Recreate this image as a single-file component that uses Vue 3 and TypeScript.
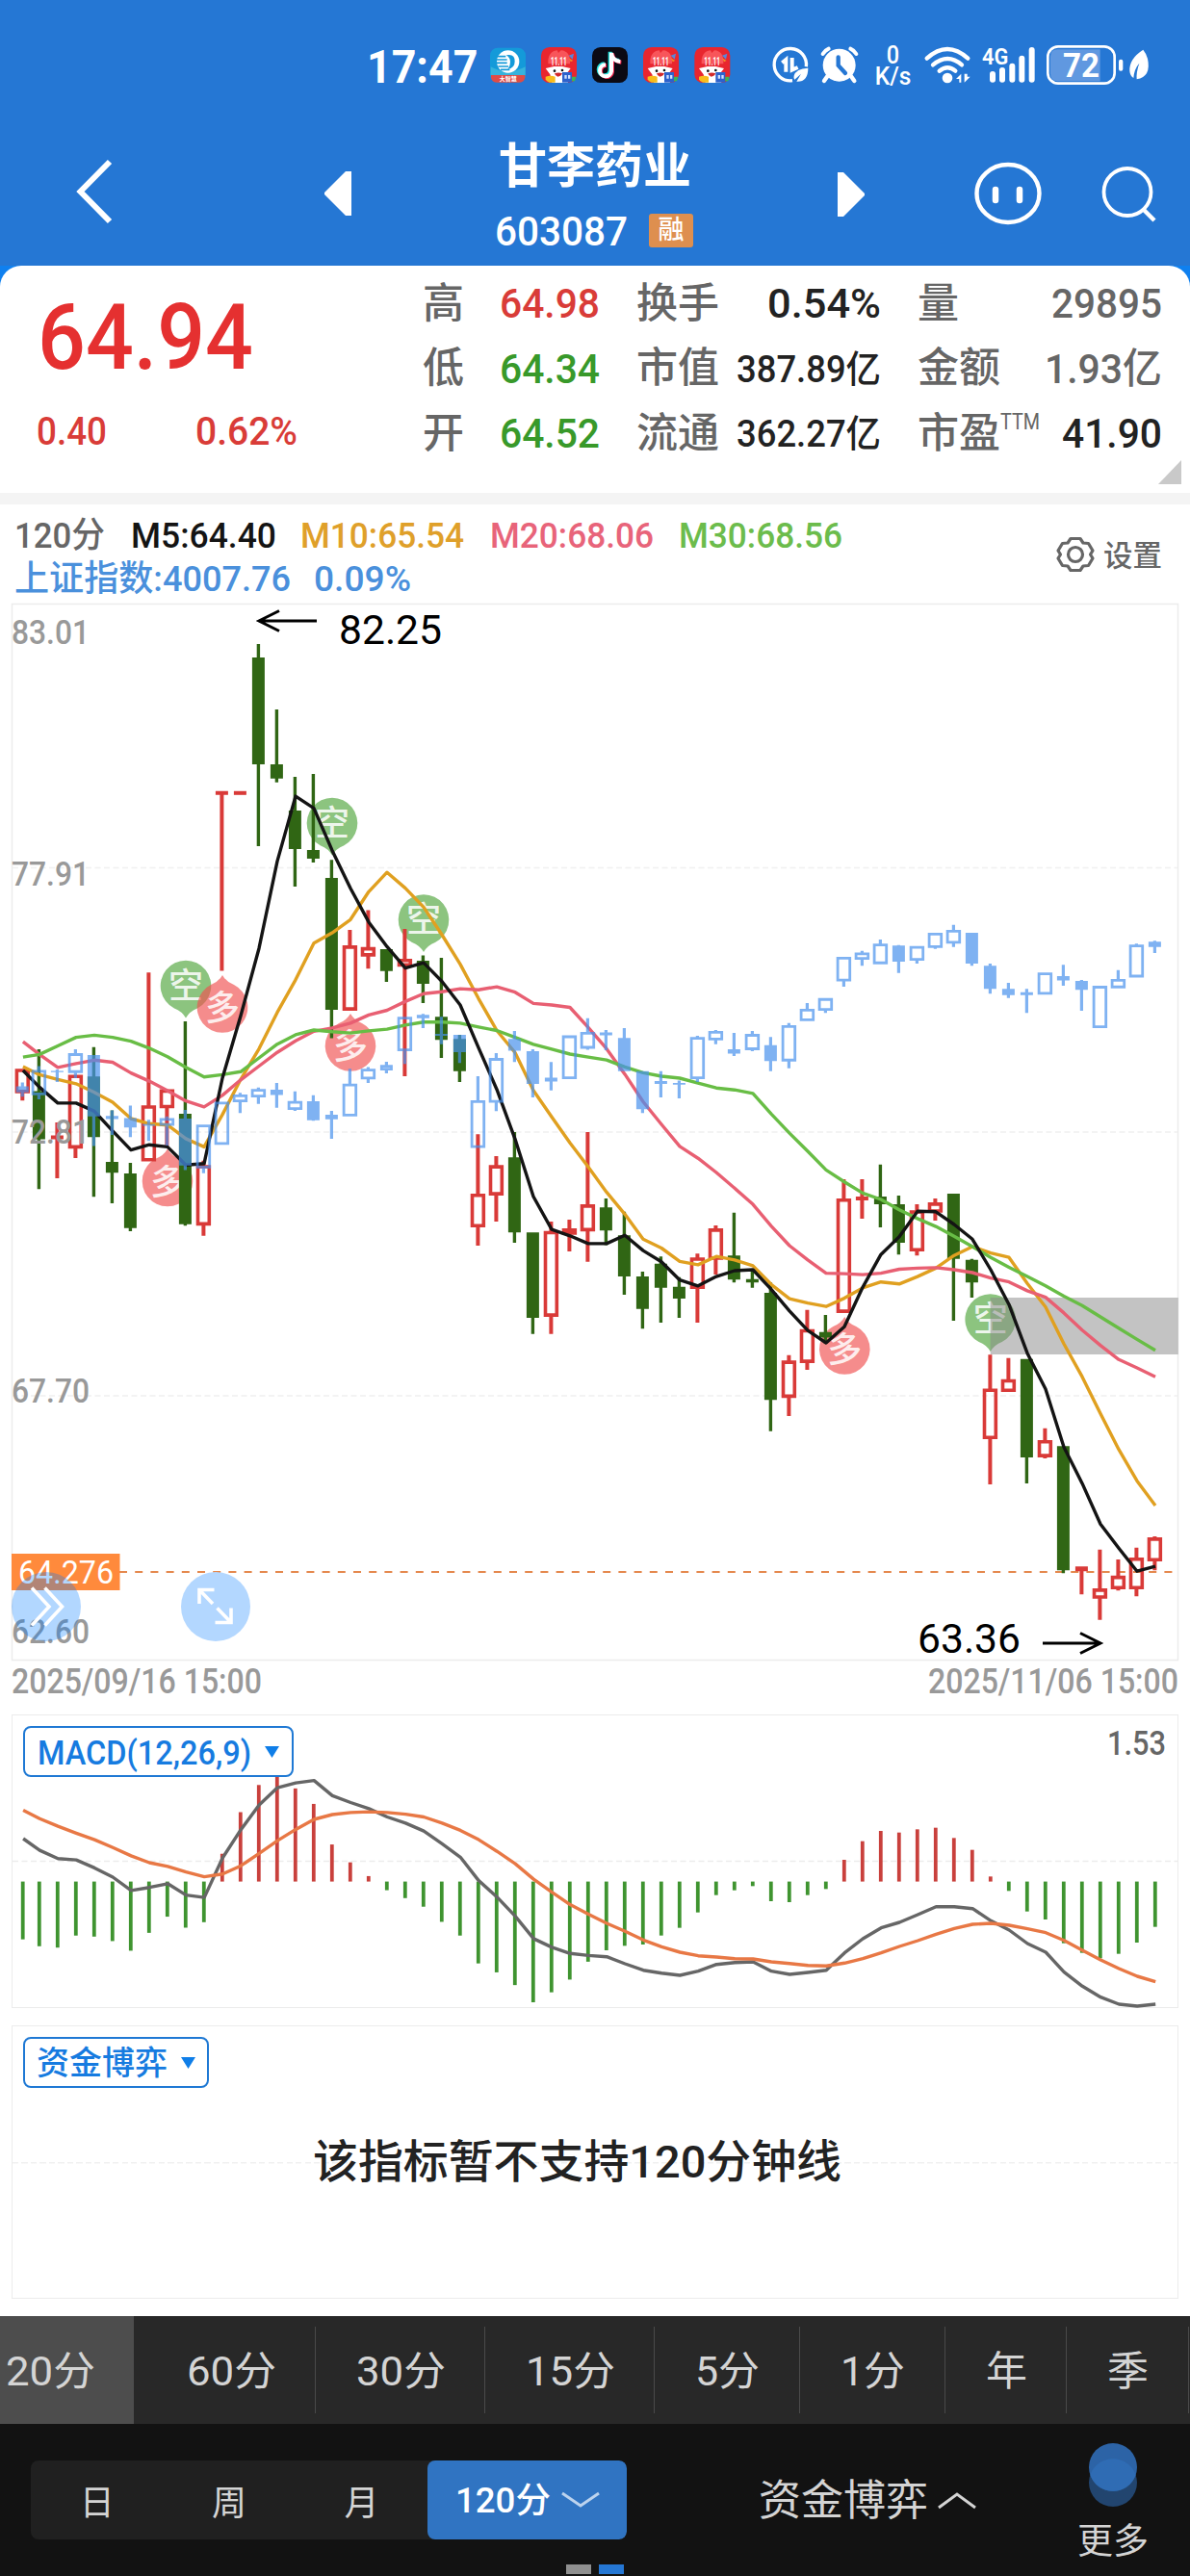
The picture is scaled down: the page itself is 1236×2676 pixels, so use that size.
<script setup lang="ts">
import { h } from 'vue'

type Candle = [kind: string, high: number, top: number, bottom: number, low: number]

const FONT = 'Roboto, "Noto Sans CJK SC", sans-serif'

/* Single line of text condensed to an exact width */
const Fit = (p: { t: string; w: number; s: number; b?: number | string }) =>
  h('svg', { width: p.w, height: p.s, style: 'display:block;overflow:visible;flex:none' }, [
    h('text', {
      x: 0, y: p.s * 0.86, fill: 'currentColor', textLength: p.w, lengthAdjust: 'spacingAndGlyphs',
      'font-size': p.s, 'font-weight': p.b ?? 400, 'font-family': FONT,
    }, p.t),
  ])
Fit.props = ['t', 'w', 's', 'b']

const quotes = [
  { k: '高', v: '64.98', c: 'red', w: 104, s: 43 }, { k: '换手', v: '0.54%', c: 'dark', w: 118, s: 43 }, { k: '量', v: '29895', c: 'gray', w: 115, s: 43 },
  { k: '低', v: '64.34', c: 'green', w: 104, s: 43 }, { k: '市值', v: '387.89亿', c: 'dark', w: 150, s: 39 }, { k: '金额', v: '1.93亿', c: 'gray', w: 122, s: 43 },
  { k: '开', v: '64.52', c: 'green', w: 104, s: 43 }, { k: '流通', v: '362.27亿', c: 'dark', w: 150, s: 39 }, { k: '市盈', sup: 'TTM', v: '41.90', c: 'dark', w: 104, s: 43 },
]

const X = (i: number) => (i === 0 ? 23.3 : 21.4 + 19 * i)
/* the price series is stored in three blocks of 21 bars, each with its own unit */
const Y = (i: number, v: number) => (i < 21 ? 620 + v / 2.24 : i < 42 ? 620 + v / 1.96 : 920 + v / 1.96)
/* the MACD series is stored in two blocks */
const MY = (i: number, v: number) => (i < 32 ? 1560 + v / 2.8 : 1660 + v / 3)

const stock: Candle[] = [
  ['r', 1098, 1098, 1155, 1172], ['g', 1053, 1150, 1262, 1378], ['r', 1223, 1253, 1262, 1353], ['r', 1112, 1112, 1284, 1306], ['g', 1048, 1116, 1257, 1396],
  ['g', 1195, 1315, 1340, 1411], ['g', 1317, 1342, 1469, 1476], ['r', 874, 1183, 1314, 1314], ['r', 1146, 1146, 1190, 1277], ['g', 988, 1203, 1460, 1463],
  ['r', 1312, 1322, 1463, 1487], ['r', 452, 452, 461, 870], ['r', 452, 452, 461, 461], ['g', 110, 141, 390, 580], ['g', 262, 390, 423, 432],
  ['g', 419, 497, 587, 674], ['g', 412, 589, 609, 618], ['g', 612, 654, 961, 1027], ['r', 775, 811, 963, 963], ['r', 729, 815, 837, 865], ['g', 820, 820, 871, 896],
  ['r', 676, 737, 753, 976], ['g', 730, 741, 788, 827], ['g', 735, 855, 902, 939], ['g', 892, 900, 966, 988], ['r', 1094, 1215, 1284, 1321],
  ['r', 1139, 1157, 1219, 1272], ['g', 1090, 1141, 1294, 1315], ['g', 1294, 1294, 1468, 1501], ['r', 1272, 1291, 1466, 1501], ['r', 1268, 1286, 1299, 1333],
  ['r', 1090, 1237, 1292, 1354], ['g', 1225, 1243, 1290, 1320], ['g', 1252, 1300, 1384, 1421], ['g', 1374, 1384, 1450, 1490], ['g', 1343, 1358, 1407, 1478],
  ['g', 1385, 1405, 1429, 1468], ['r', 1337, 1345, 1409, 1478], ['r', 1280, 1286, 1350, 1380], ['g', 1254, 1341, 1390, 1396], ['g', 1370, 1389, 1396, 1407], ['g', 1396, 1417, 1635, 1699],
  ['r', 956, 967, 1043, 1080], ['r', 864, 903, 972, 986], ['g', 874, 909, 920, 932], ['r', 598, 637, 870, 870], ['r', 598, 633, 641, 678], ['g', 568, 633, 649, 696],
  ['g', 631, 649, 727, 751], ['r', 649, 661, 745, 753], ['r', 637, 645, 666, 682], ['g', 627, 627, 760, 886], ['g', 760, 762, 808, 839], ['r', 955, 1024, 1127, 1219],
  ['r', 962, 1005, 1031, 1031], ['g', 964, 964, 1164, 1217], ['r', 1105, 1129, 1164, 1166], ['g', 1141, 1141, 1394, 1400], ['r', 1386, 1386, 1396, 1443],
  ['r', 1352, 1431, 1452, 1495], ['r', 1372, 1405, 1433, 1435], ['r', 1348, 1368, 1433, 1447], ['r', 1325, 1327, 1376, 1394],
]
const index: Candle[] = [
  ['f', 1130, 1139, 1153, 1163], ['h', 1092, 1101, 1160, 1169], ['f', 1100, 1103, 1106, 1129], ['h', 1053, 1062, 1108, 1120], ['f', 1066, 1066, 1209, 1278],
  ['f', 1195, 1208, 1215, 1252], ['f', 1184, 1213, 1235, 1257], ['f', 1217, 1227, 1231, 1266], ['h', 1209, 1213, 1231, 1277], ['f', 1194, 1214, 1323, 1334],
  ['h', 1228, 1228, 1330, 1341], ['h', 1175, 1175, 1275, 1275], ['h', 1154, 1158, 1176, 1201], ['h', 1142, 1145, 1165, 1180], ['f', 1131, 1147, 1159, 1189],
  ['h', 1151, 1173, 1194, 1196], ['f', 1160, 1174, 1218, 1219], ['f', 1196, 1205, 1216, 1261], ['h', 1098, 1133, 1209, 1209], ['h', 1094, 1098, 1123, 1131], ['h', 1082, 1089, 1102, 1109],
  ['h', 855, 855, 925, 951], ['f', 849, 851, 858, 878], ['f', 855, 890, 894, 911], ['f', 892, 892, 927, 949], ['h', 976, 1025, 1122, 1122],
  ['h', 929, 939, 1030, 1047], ['f', 884, 900, 924, 947], ['f', 921, 925, 992, 1019], ['f', 947, 979, 987, 1005], ['h', 893, 893, 982, 982],
  ['h', 858, 886, 920, 922], ['f', 882, 887, 893, 923], ['f', 878, 898, 966, 966], ['f', 966, 966, 1043, 1051], ['f', 966, 986, 992, 1019],
  ['f', 985, 990, 993, 1021], ['h', 894, 896, 982, 988], ['h', 882, 884, 903, 911], ['f', 888, 921, 930, 935], ['h', 884, 890, 923, 925], ['f', 896, 913, 945, 966],
  ['h', 280, 284, 358, 372], ['h', 239, 251, 276, 276], ['h', 229, 229, 255, 259], ['h', 145, 145, 195, 206], ['h', 133, 136, 151, 163], ['h', 110, 118, 160, 160],
  ['f', 121, 122, 155, 178], ['h', 123, 123, 153, 159], ['h', 96, 96, 127, 129], ['h', 80, 90, 118, 125], ['f', 96, 96, 159, 163], ['f', 159, 163, 210, 220],
  ['f', 198, 210, 223, 229], ['f', 210, 217, 223, 259], ['h', 177, 177, 222, 222], ['f', 161, 184, 193, 204], ['f', 192, 194, 212, 255],
  ['h', 204, 204, 290, 290], ['h', 172, 190, 209, 209], ['h', 118, 120, 187, 187], ['f', 112, 114, 125, 137],
]

/* Filled body with wicks, or a ring body with wicks outside of it */
function shape(c: Candle, i: number): string {
  const x = X(i)
  const [hi, t, b, lo] = [Y(i, c[1]), Y(i, c[2]), Y(i, c[3]), Y(i, c[4])]
  const hollow = c[0] === 'r' || c[0] === 'h'
  const w = hollow && b - t > 6.5 ? 7.7 : 6.5
  const n = c[0] === 'g' ? 1.7 : c[0] === 'r' ? 2 : 1.6
  let d = `M${x - w} ${t}H${x + w}V${b}H${x - w}Z`
  const e = c[0] === 'r' ? 3.6 : 2.8
  if (hollow && b - t > e * 2) d += `M${x - w + e} ${t + e}V${b - e}H${x + w - e}V${t + e}Z`
  if (hi < t) d += `M${x - n} ${hi}H${x + n}V${t}H${x - n}Z`
  if (lo > b) d += `M${x - n} ${b}H${x + n}V${lo}H${x - n}Z`
  return d
}
const stockShapes = stock.map((c, i) => ({ d: shape(c, i), fill: c[0] === 'r' ? '#d93a38' : '#306614' }))
const indexShapes = index.map(shape)

const averages = [
  { c: '#e0a020', p: [1093, 1112, 1123, 1133, 1153, 1176, 1214, 1226, 1229, 1261, 1280, 1205, 1123, 1052, 967, 891, 806, 782, 751, 686, 641, 593, 632, 688, 748, 818, 883, 928, 1005, 1059, 1112, 1161, 1212, 1257, 1308, 1326, 1353, 1360, 1343, 1350, 1362, 1400, 841, 850, 857, 840, 819, 807, 811, 796, 779, 753, 735, 748, 757, 810, 858, 933, 1000, 1075, 1148, 1212, 1262] },
  { c: '#e85f72', p: [1035, 1065, 1095, 1086, 1078, 1083, 1108, 1127, 1149, 1173, 1187, 1160, 1124, 1092, 1060, 1033, 1011, 1003, 992, 973, 962, 824, 808, 804, 798, 800, 794, 805, 828, 831, 836, 877, 920, 972, 1028, 1074, 1119, 1143, 1172, 1204, 1237, 1281, 733, 762, 789, 790, 792, 789, 781, 779, 778, 782, 788, 799, 807, 825, 838, 870, 905, 936, 965, 982, 1000] },
  { c: '#68bd45', p: [1071, 1065, 1045, 1025, 1020, 1025, 1034, 1050, 1070, 1095, 1117, 1112, 1105, 1073, 1041, 1019, 1008, 1012, 1015, 1010, 1006, 872, 866, 866, 868, 876, 883, 897, 911, 921, 931, 937, 943, 957, 969, 976, 980, 990, 1000, 1004, 1011, 1053, 504, 541, 579, 603, 626, 639, 660, 678, 694, 714, 735, 757, 777, 796, 815, 836, 855, 878, 901, 924, 946] },
  { c: '#141414', p: [1102, 1141, 1178, 1178, 1197, 1243, 1287, 1275, 1280, 1322, 1319, 1120, 975, 818, 615, 464, 492, 590, 678, 757, 814, 756, 745, 783, 831, 918, 1003, 1104, 1221, 1288, 1301, 1317, 1317, 1300, 1331, 1354, 1391, 1403, 1384, 1372, 1370, 1410, 866, 906, 931, 898, 818, 751, 715, 663, 664, 690, 720, 782, 853, 952, 1025, 1143, 1217, 1300, 1349, 1396, 1386] },
].map(a => ({ c: a.c, pts: a.p.map((v, i) => `${(X(i) + 0.6).toFixed(1)},${Y(i, v).toFixed(1)}`).join(' ') }))

const macdEnds = [1273, 1293, 1297, 1262, 1265, 1278, 1306, 1254, 1207, 1239, 1223, 1024, 903, 824, 795, 834, 879, 997, 1049, 1089, 1130, 1153, 1178, 1222, 1262, 1343, 1369, 1406, 1456, 1427, 1390, 1338, 1098, 1084, 1080, 1052, 1028, 980, 926, 911, 898, 945, 948, 926, 907, 816, 758, 726, 731, 721, 716, 748, 785, 868, 913, 977, 1002, 1076, 1106, 1123, 1109, 1074, 1025]
const ZERO = 1954.6
const macdBars = macdEnds.map((v, i) => {
  const y = MY(i, v)
  return { x: X(i) + 0.4, y, c: y < ZERO ? '#c9403c' : '#3f9430' }
})
const line = (p: number[]) => p.map((v, i) => `${(X(i) + 0.8).toFixed(1)},${MY(i, v).toFixed(1)}`).join(' ')
const dif = line([980, 1014, 1038, 1042, 1065, 1092, 1131, 1122, 1111, 1144, 1151, 1036, 954, 882, 832, 818, 811, 855, 875, 893, 917, 935, 958, 995, 1034, 1102, 1150, 1206, 1271, 1296, 1314, 1320, 1118, 1140, 1160, 1169, 1176, 1163, 1142, 1136, 1134, 1163, 1173, 1167, 1160, 1106, 1062, 1028, 1011, 987, 962, 962, 968, 1006, 1035, 1077, 1104, 1166, 1210, 1244, 1266, 1272, 1266])
const dea = line([897, 922, 944, 964, 983, 1006, 1030, 1050, 1061, 1077, 1091, 1083, 1059, 1023, 986, 953, 924, 910, 904, 902, 904, 909, 917, 935, 956, 983, 1017, 1053, 1098, 1136, 1172, 1200, 1014, 1039, 1066, 1087, 1104, 1115, 1119, 1124, 1125, 1134, 1139, 1145, 1147, 1138, 1124, 1106, 1086, 1068, 1048, 1030, 1017, 1014, 1020, 1031, 1043, 1067, 1098, 1128, 1155, 1179, 1196])

/* signal pins, placed by their tip */
const shorts = [[193, 1057.5], [345, 888.5], [440, 989], [1028.7, 1404]]
const longs = [[231, 1013], [174, 1193.6], [364, 1053], [877.3, 1368]]

const axis = [['83.01', 669], ['77.91', 920], ['72.81', 1188], ['67.70', 1457], ['62.60', 1707]] as const

const tabs = [
  { t: '20分', w: 139, tw: 93, on: true }, { t: '60分', w: 189, tw: 93, wide: true }, { t: '30分', w: 176, tw: 93 }, { t: '15分', w: 176, tw: 93 },
  { t: '5分', w: 151, tw: 67 }, { t: '1分', w: 151, tw: 67 }, { t: '年', w: 126, tw: 43 }, { t: '季', w: 127, tw: 43 },
]
const promos = [606, 924, 1084]
</script>

<template>
  <div class="page">
    <header class="top">
      <div class="status">
        <svg width="400" height="80" viewBox="0 0 1200 240">
          <text x="63" y="167" class="num" font-size="142" font-weight="700" fill="#fff" textLength="346" lengthAdjust="spacingAndGlyphs">17:47</text>
          <g>
            <rect x="447" y="59" width="111" height="108" rx="24" fill="#149ad9" />
            <path d="M449 118q54 30 108 0v26H449z" fill="#36b3dc" />
            <circle cx="503" cy="102" r="35" fill="#fff" />
            <path d="M466 86h30M466 96h34M468 106h32M472 117h32M480 127h28" stroke="#149ad9" stroke-width="5" />
            <path d="M497 82q28-6 27 20 0 20-22 24 9-12 8-24-1-14-13-20z" fill="#149ad9" />
            <path d="M450 144h106v8q-3 15-20 15h-66q-17 0-20-15z" fill="#e04b45" />
            <text x="476" y="162" class="num" font-size="18" font-weight="700" fill="#fff">大智慧</text>
          </g>
          <g v-for="x in promos" :key="x" :transform="`translate(${x} 57)`">
            <rect width="111" height="111" rx="26" fill="#e8262f" />
            <path d="M22 52q-2-38 28-42l4 8 8-8q30 2 28 42z" fill="#f8555a" />
            <text x="30" y="56" class="num" font-size="38" font-weight="700" fill="#fff" textLength="50" lengthAdjust="spacingAndGlyphs">11.11</text>
            <path d="M14 66l26-6h26l26 6-12 16 4 29H34l-6-26z" fill="#fff" />
            <circle cx="42" cy="74" r="4" fill="#111" /><circle cx="66" cy="72" r="4" fill="#111" />
            <path d="M42 82q12-5 24 0-5 10-14 10-8-2-10-10z" fill="#d22a2a" />
            <path d="M14 92q16-6 30 0v18H26q-10-2-12-10z" fill="#f7bd1c" />
            <rect x="66" y="78" width="30" height="32" fill="#2d62cc" />
            <path d="M73 87h7v11h-7zM84 87h7v11h-7z" fill="#cfe0ff" />
            <path d="M86 26l16-6-4 18z" fill="#5a86d8" /><path d="M86 34l14 8-8 4z" fill="#f28a2a" />
            <path d="M96 92h13l-4 14h-9z" fill="#3fb554" />
          </g>
          <g>
            <rect x="765" y="57" width="111" height="111" rx="26" fill="#0b0a14" />
            <g fill="none" stroke-width="12">
              <path d="M823 72v58a18 18 0 1 1-18-20M823 74q4 24 28 26" stroke="#25e0dc" transform="translate(-2 -1)" />
              <path d="M823 72v58a18 18 0 1 1-18-20M823 74q4 24 28 26" stroke="#f2264f" transform="translate(5 4)" />
              <path d="M823 72v58a18 18 0 1 1-18-20M823 74q4 24 28 26" stroke="#fff" transform="translate(2 2)" />
            </g>
          </g>
        </svg>
        <svg class="sys" width="440" height="80" viewBox="0 0 1320 240">
          <g fill="none" stroke="#fff" stroke-width="10">
            <path d="M172 118a50 50 0 1 0-43 43" />
            <path d="M97 106l12-10v38M128 90v38l18-8" stroke-width="12" />
          </g>
          <path d="M178 122q-38 2-44 24-2 8 2 12l20-18-14 24q36 2 36-42z" fill="#fff" />
          <circle cx="275" cy="113" r="51" fill="#fff" />
          <path d="M238 148l-10 14M312 148l10 14" stroke="#fff" stroke-width="13" stroke-linecap="round" />
          <path d="M224 78q8-12 18-16M328 78q-8-12-18-16" stroke="#fff" stroke-width="12" stroke-linecap="round" fill="none" />
          <path d="M272 88v26l22 24" fill="none" stroke="#2577d4" stroke-width="13" stroke-linecap="round" />
          <text x="422" y="108" class="num" font-size="76" font-weight="500" fill="#fff" textLength="40" lengthAdjust="spacingAndGlyphs">0</text>
          <text x="386" y="175" class="num" font-size="76" font-weight="500" fill="#fff" textLength="113" lengthAdjust="spacingAndGlyphs">K/s</text>
          <g fill="none" stroke="#fff" stroke-width="13" stroke-linecap="round">
            <path d="M548 92q64-58 128 0M567 112q46-38 90 0M587 131q26-20 50 0" />
          </g>
          <circle cx="612" cy="153" r="16" fill="#fff" />
          <path d="M639 156l16-16v27h-6v-11zM665 140l0 27 18-18h-9v-9z" fill="#fff" />
          <text x="720" y="111" class="num" font-size="74" font-weight="600" fill="#fff" textLength="82" lengthAdjust="spacingAndGlyphs">4G</text>
          <path d="M753 141v17M783 129v29M814 116v42M844 92v66M875 66v92" stroke="#fff" stroke-width="18" stroke-linecap="round" />
          <path d="M1088 64H955q-22 0-22 22v53q0 24 22 24h133z" fill="#6098e0" />
          <rect x="925" y="55" width="208" height="115" rx="32" fill="none" stroke="#fff" stroke-width="8" />
          <text x="972" y="150" class="num" font-size="106" font-weight="700" fill="#fff" textLength="114" lengthAdjust="spacingAndGlyphs">72</text>
          <rect x="1146" y="95" width="13" height="36" rx="6" fill="#fff" />
          <path d="M1222 65q-44 28-42 66 1 14 12 22 2-28 18-46-10 28-8 50 46-8 34-64-4-16-14-28z" fill="#fff" />
        </svg>
      </div>
      <nav class="nav">
        <svg width="516" height="166" viewBox="0 110 516 166">
          <path d="M114 168L83.500 199l30.500 31" fill="none" stroke="#fff" stroke-width="6" />
          <path d="M365 178v46h-6l-22-22v-2l22-22z" fill="#fff" />
        </svg>
        <div class="name">
          <Fit t="甘李药业" :w="200" :s="50" b="700" />
          <div class="code">
            <Fit t="603087" :w="138" :s="43" b="500" />
            <span class="badge">融</span>
          </div>
        </div>
        <svg width="514" height="166" viewBox="722 110 514 166">
          <path d="M870 179v46h6l22-22v-2l-22-22z" fill="#fff" />
          <g fill="none" stroke="#fff">
            <ellipse cx="1047" cy="201" rx="32.500" ry="30" stroke-width="4.400" />
            <path d="M1034 197v11M1059 197v11" stroke-width="6.500" stroke-linecap="round" />
            <circle cx="1171" cy="199.500" r="24.500" stroke-width="3.800" />
            <path d="M1187 217l12 12" stroke-width="4.400" />
          </g>
        </svg>
      </nav>
    </header>

    <section class="card-wrap">
      <div class="card">
        <div class="last">
          <Fit class="price" t="64.94" :w="224" :s="94" b="500" />
          <div class="delta">
            <Fit t="0.40" :w="73" :s="40" b="500" />
            <Fit t="0.62%" :w="106" :s="40" b="500" />
          </div>
        </div>
        <div class="quotes">
          <div v-for="q in quotes" :key="q.k" class="quote">
            <span class="label">{{ q.k }}<sup v-if="q.sup"><Fit :t="q.sup" :w="41" :s="23" /></sup></span>
            <Fit :class="q.c" :t="q.v" :w="q.w" :s="q.s" b="500" />
          </div>
        </div>
        <svg class="corner" width="24" height="25"><path d="M24 0v25H0z" fill="#c9c9c9" /></svg>
      </div>
    </section>

    <section class="legend">
      <div class="lines">
        <div class="row">
          <Fit class="gray" t="120分" :w="94" :s="37" b="500" />
          <Fit style="margin-left: 27px" t="M5:64.40" :w="151" :s="37" b="500" />
          <Fit class="gold" style="margin-left: 25px" t="M10:65.54" :w="170" :s="37" b="500" />
          <Fit class="pink" style="margin-left: 27px" t="M20:68.06" :w="170" :s="37" b="500" />
          <Fit class="lime" style="margin-left: 26px" t="M30:68.56" :w="170" :s="37" b="500" />
        </div>
        <div class="row blue">
          <Fit t="上证指数:4007.76" :w="287" :s="37" b="500" />
          <Fit style="margin-left: 24px" t="0.09%" :w="101" :s="37" b="500" />
        </div>
      </div>
      <div class="settings">
        <svg width="38" height="38" viewBox="-19 -19 38 38" fill="none" stroke="#666" stroke-width="3.200">
          <path d="M-5-16.500h10l3 4.500 5.500 .5 4.500 7.500-2.500 4 2.500 4-4.500 7.500-5.500 .5-3 4.500h-10l-3-4.500-5.500-.5-4.500-7.500 2.500-4-2.500-4 4.500-7.500 5.500-.5z" stroke-linejoin="round" />
          <circle r="7.500" />
        </svg>
        <span>设置</span>
      </div>
    </section>

    <svg class="chart" width="1236" height="1100" viewBox="0 626 1236 1100">
      <rect x="12.500" y="627.500" width="1211" height="1097" fill="none" stroke="#ececec" stroke-width="1.500" />
      <path d="M13 901.500H1223M13 1176H1223M13 1450H1223" stroke="#f0f0f0" stroke-width="1.500" stroke-dasharray="6 3.500" />
      <g class="pin">
        <g v-for="(m, i) in shorts" :key="'s' + i" :transform="`translate(${m[0]} ${m[1]})`">
          <path d="M0 0Q-4-7-12-10A26.300 26.300 0 1 1 12-10Q4-7 0 0z" fill="#8cc47f" />
          <text y="-21" text-anchor="middle">空</text>
        </g>
        <g v-for="(m, i) in longs" :key="'l' + i" :transform="`translate(${m[0]} ${m[1]})`">
          <path d="M0 0Q4 7 12 10A26.300 26.300 0 1 1-12 10Q-4 7 0 0z" fill="#f05050" fill-opacity=".66" />
          <text y="47" text-anchor="middle">多</text>
        </g>
      </g>
      <rect x="1028.700" y="1348" width="195" height="59" fill="#888" fill-opacity=".5" />
      <path d="M124 1633H1223" stroke="#e5894e" stroke-width="2" stroke-dasharray="8 8.200" />
      <path v-for="(s, i) in stockShapes" :key="'c' + i" :d="s.d" :fill="s.fill" />
      <polyline v-for="a in averages" :key="a.c" :points="a.pts" :stroke="a.c" fill="none" stroke-width="3.400" stroke-linejoin="round" />
      <path v-for="(d, i) in indexShapes" :key="'i' + i" :d="d" fill="rgb(72,145,236)" fill-opacity=".7" />
      <g fill="none" stroke="#000" stroke-width="3">
        <path d="M329 645H269M290 634.500L269 645l21 10.500" />
        <path d="M1083 1707H1143M1122 1696.500L1143 1707l-21 10.500" />
      </g>
      <g class="num" font-size="42" fill="#000">
        <text x="352" y="669" textLength="107" lengthAdjust="spacingAndGlyphs">82.25</text>
        <text x="953" y="1717" textLength="107" lengthAdjust="spacingAndGlyphs">63.36</text>
      </g>
      <g class="num" font-size="35" font-weight="500" fill="#999">
        <text v-for="a in axis" :key="a[0]" x="12" :y="a[1]" textLength="81" lengthAdjust="spacingAndGlyphs">{{ a[0] }}</text>
      </g>
      <rect x="12" y="1614" width="112.500" height="38" fill="#ff8a3c" />
      <text class="num" x="19" y="1645" font-size="34" fill="#fff" textLength="99" lengthAdjust="spacingAndGlyphs">64.276</text>
      <circle cx="48" cy="1669" r="36" fill="#007aff" fill-opacity=".3" />
      <circle cx="224" cy="1669" r="36" fill="#b3d7ff" />
      <g fill="none" stroke="#fff" stroke-width="3.600">
        <path d="M33 1649.500l18 19.500-18 19.500M46.500 1649.500l18 19.500-18 19.500" />
        <path d="M222.500 1651.500H207V1666M207 1651.500l14 14.500M223.500 1685.500H240V1670.500M240 1685.500l-14.500-15" />
      </g>
    </svg>

    <div class="dates">
      <Fit t="2025/09/16 15:00" :w="260" :s="36" b="500" />
      <Fit t="2025/11/06 15:00" :w="260" :s="36" b="500" />
    </div>

    <section class="panel macd">
      <svg class="plot" width="1236" height="305" viewBox="0 1781 1236 305">
        <path d="M13 1933.600H1223" stroke="#ececec" stroke-width="1.500" stroke-dasharray="6 3.500" />
        <path v-for="(b, i) in macdBars" :key="i" :d="`M${b.x} ${ZERO}V${b.y}`" :stroke="b.c" stroke-width="3.800" />
        <polyline :points="dif" fill="none" stroke="#666" stroke-width="3.400" stroke-linejoin="round" />
        <polyline :points="dea" fill="none" stroke="#e87845" stroke-width="3.400" stroke-linejoin="round" />
      </svg>
      <button class="pick">
        <Fit t="MACD(12,26,9)" :w="222" :s="35.500" b="500" />
        <svg width="15" height="12"><path d="M0 0h15l-7.500 12z" fill="#0f7ee8" /></svg>
      </button>
      <Fit class="gray" t="1.53" :w="61" :s="35" b="500" />
    </section>

    <section class="panel flow">
      <button class="pick">
        <Fit t="资金博弈" :w="136" :s="34" b="500" />
        <svg width="15" height="12"><path d="M0 0h15l-7.500 12z" fill="#0f7ee8" /></svg>
      </button>
      <div class="note"><Fit t="该指标暂不支持120分钟线" :w="549" :s="47" b="500" /></div>
    </section>

    <div class="tabs">
      <div v-for="t in tabs" :key="t.t" class="tab" :class="{ on: t.on, wide: t.wide }" :style="{ width: t.w + 'px' }">
        <Fit :t="t.t" :w="t.tw" :s="42" />
      </div>
    </div>

    <footer class="bottom">
      <div class="segment">
        <span class="seg">日</span>
        <span class="seg">周</span>
        <span class="seg">月</span>
        <span class="seg active">
          <Fit t="120分" :w="99" :s="36" b="500" />
          <svg width="40" height="17" fill="none" stroke="#bcd3ee" stroke-width="3"><path d="M1 1l19 13L39 1" /></svg>
        </span>
      </div>
      <div class="gauge">
        <Fit t="资金博弈" :w="176" :s="44" />
        <svg width="40" height="19" fill="none" stroke="#d4d4d4" stroke-width="3"><path d="M1 17L20 3l19 14" /></svg>
      </div>
      <div class="more">
        <svg width="52" height="68">
          <circle cx="26" cy="42" r="25" fill="#22456f" />
          <circle cx="26" cy="26" r="25" fill="#2c63a6" />
          <path d="M2.400 34a25 25 0 0 1 47.200 0A25 25 0 0 1 2.400 34z" fill="#2f6cb4" />
        </svg>
        <span>更多</span>
      </div>
      <div class="dots"><i /><i class="cur" /></div>
    </footer>
  </div>
</template>

<style>
body { background: #fff; }
</style>

<style scoped>
.page {
  width: 1236px;
  height: 2676px;
  display: flex;
  flex-direction: column;
  overflow: hidden;
  background: #fff;
  font-family: Roboto, "Noto Sans CJK SC", sans-serif;
  color: #141414;
}
svg { display: block; flex: none; overflow: visible; }
.num { font-family: Roboto, "Noto Sans CJK SC", sans-serif; }
.top { height: 276px; background: #2577d4; flex: none; }
.status { display: flex; padding: 30px 0 0 360px; }
.sys { margin-left: 20px; }
.nav { display: flex; height: 166px; color: #fff; }
.name { width: 206px; display: flex; flex-direction: column; align-items: center; padding: 37px 3px 0 0; box-sizing: border-box; }
.code { display: flex; align-items: center; align-self: flex-start; gap: 22px; margin: 21px 0 0 -2px; white-space: nowrap; }
.badge {
  width: 46px; height: 35px; flex: none; border-radius: 3px; background: #de8f4f;
  font-size: 27px; font-weight: 500; line-height: 34px; text-align: center;
}
.card-wrap { background: #0f80ef; height: 236px; flex: none; border-bottom: 12px solid #f4f4f4; }
.card { position: relative; height: 236px; display: flex; background: #fff; border-radius: 22px 22px 0 0; }
.last { width: 439px; padding: 26px 0 0 39px; box-sizing: border-box; color: #d93c38; }
.price { color: #e53030; }
.delta { display: flex; gap: 92px; margin: 32px 0 0 -1px; }
.quotes {
  display: grid; grid-template-columns: 184px 254px 254px; grid-auto-rows: 67.500px;
  column-gap: 38px; padding-top: 5px; height: 203px;
}
.quote { display: flex; align-items: center; justify-content: space-between; }
.label { display: flex; font-size: 43px; font-weight: 500; line-height: 60px; color: #666; white-space: nowrap; }
.label sup { line-height: 0; padding-top: 6px; }
.corner { position: absolute; right: 9px; bottom: 9px; }
.red { color: #d93c38; }
.green { color: #38992a; }
.dark { color: #222; }
.gray { color: #666; }
.gold { color: #dfa02a; }
.pink { color: #e8647a; }
.lime { color: #6cbc4c; }
.blue { color: #4a90dc; }
.legend { height: 102px; flex: none; display: flex; justify-content: space-between; padding: 0 29px 0 15px; }
.lines { padding-top: 9px; }
.row { display: flex; height: 45px; align-items: center; }
.settings { display: flex; gap: 10px; align-items: center; height: 103px; font-size: 30.500px; font-weight: 500; color: #666; }
.settings span { margin-top: -2px; }
.pin { font: 500 36px "Noto Sans CJK SC", sans-serif; fill: #fff; }
.pin text { fill-opacity: .85; }
.dates { display: flex; justify-content: space-between; align-items: center; height: 40px; padding: 0 12px; color: #999; flex: none; }
.panel { flex: none; box-sizing: border-box; margin: 0 12px; width: 1212px; border: 1.500px solid #ececec; position: relative; display: flex; justify-content: space-between; }
.macd { margin-top: 15px; height: 305px; padding: 11px 12px 0 11px; }
.plot { position: absolute; left: -13px; top: -1px; }
.pick {
  position: relative; width: 281px; height: 53px; display: flex; align-items: center; justify-content: space-between;
  border: 2px solid #1f79d4; border-radius: 8px; background: #fff; color: #167be0; padding: 0 13px 0 13px; box-sizing: border-box;
}
.flow { margin-top: 18px; height: 284px; display: block; padding: 11px 0 0 11px;
  background: repeating-linear-gradient(90deg, #f0f0f0 0 6px, transparent 6px 9.500px) 0 141px / 100% 1.500px no-repeat; }
.flow .pick { width: 193px; padding: 0 12px; }
.note { padding: 53px 0 0 301px; color: #222; }
.tabs { display: flex; margin-top: 18px; height: 112px; flex: none; background: #282828; color: #d4d4d4; }
.tab { position: relative; display: flex; align-items: center; justify-content: center; box-sizing: border-box; flex: none; padding-top: 2px; }
.tab:not(.on)::after { content: ""; position: absolute; right: 0; top: 11px; width: 1px; height: 90px; background: #4a4a4a; }
.tab.on { background: #4d4d4d; justify-content: flex-end; padding-right: 40px; }
.tab.wide { padding-left: 14px; }
.bottom { position: relative; flex: 1; display: flex; background: #121212; color: #d4d4d4; }
.segment { display: flex; width: 619px; height: 82px; margin: 38px 0 0 32px; border-radius: 8px; background: #202020; overflow: hidden; }
.seg { width: 137.500px; display: flex; align-items: center; justify-content: center; font-size: 36px; }
.seg.active { width: 207px; gap: 11px; background: #3074c2; color: #fff; border-radius: 8px; }
.gauge { display: flex; gap: 10px; align-items: center; height: 82px; margin: 38px 0 0 137px; }
.more { display: flex; flex-direction: column; align-items: center; width: 76px; margin: 19px 0 0 104px; font-size: 37px; line-height: 44px; white-space: nowrap; }
.more span { margin-top: 14px; }
.dots { position: absolute; left: 588px; bottom: 2px; display: flex; gap: 8px; }
.dots i { width: 26px; height: 10px; background: #8f8f8f; }
.dots .cur { background: #2577d4; }
</style>
